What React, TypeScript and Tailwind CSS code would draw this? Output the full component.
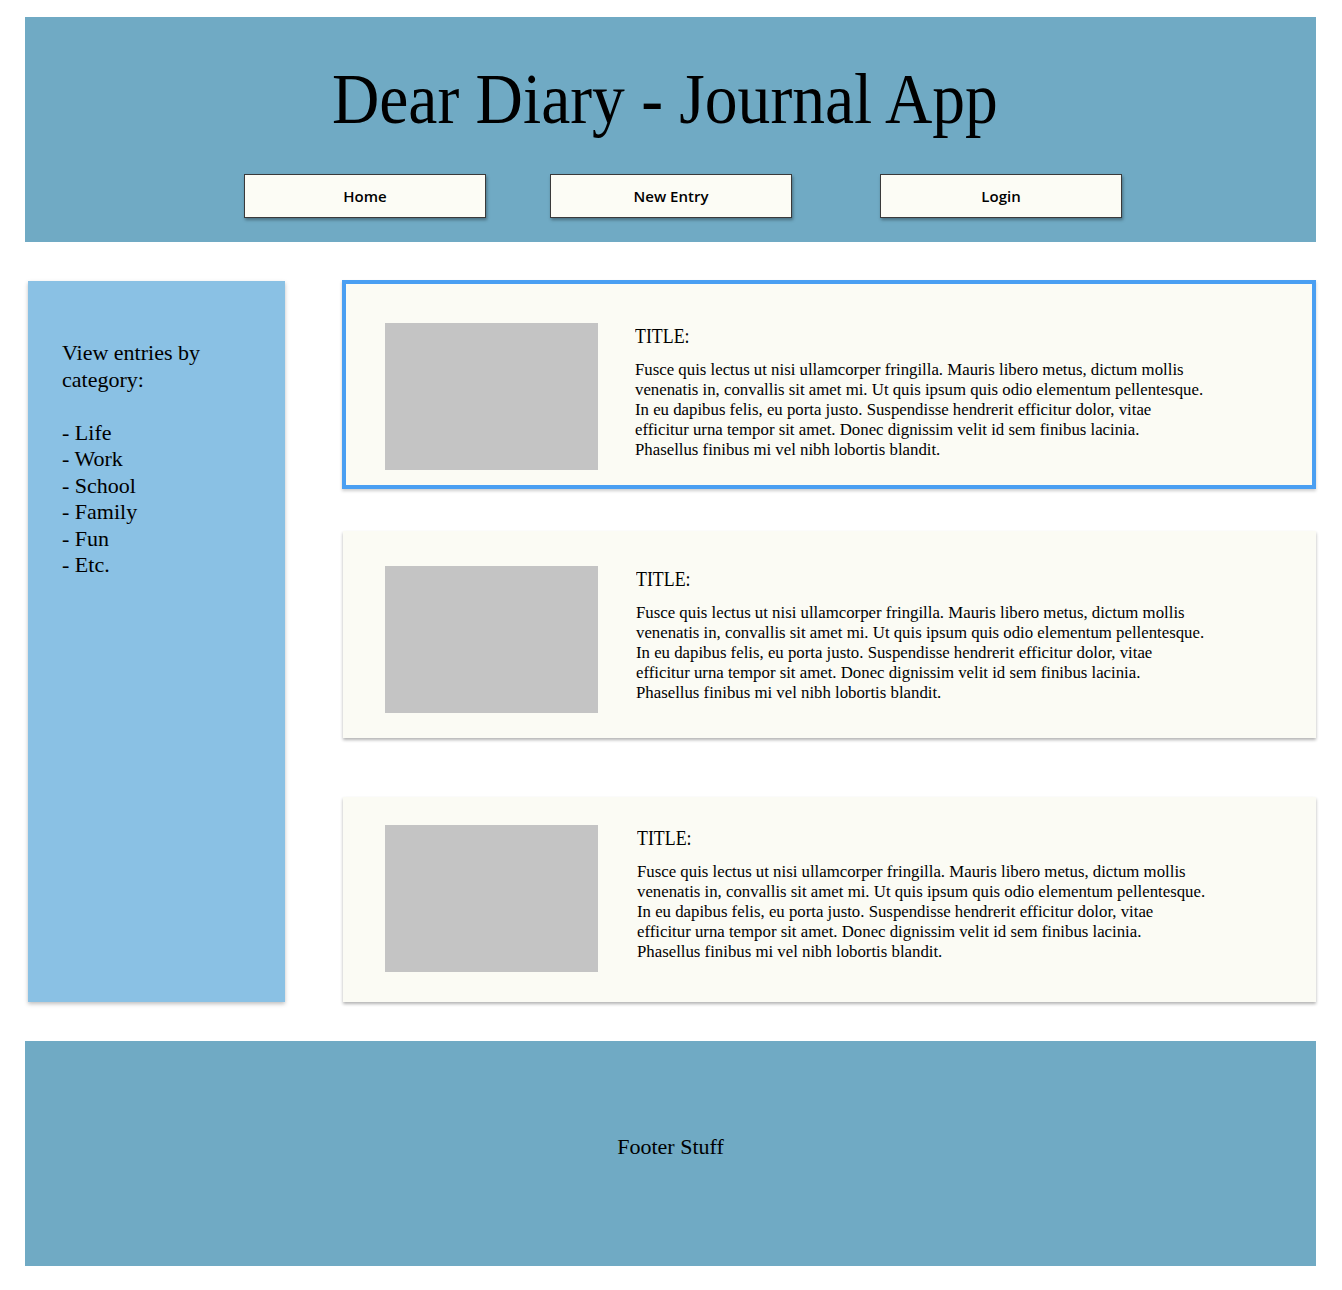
import React from "react";

const serif = { fontFamily: '"Liberation Serif", "DejaVu Serif", serif' };

const lines = [
  "Fusce quis lectus ut nisi ullamcorper fringilla. Mauris libero metus, dictum mollis",
  "venenatis in, convallis sit amet mi. Ut quis ipsum quis odio elementum pellentesque.",
  "In eu dapibus felis, eu porta justo. Suspendisse hendrerit efficitur dolor, vitae",
  "efficitur urna tempor sit amet. Donec dignissim velit id sem finibus lacinia.",
  "Phasellus finibus mi vel nibh lobortis blandit.",
];

function Card({ outer, pt, textPl }: { outer: string; pt: string; textPl: string }) {
  return (
    <div className={outer}>
      <div className={`flex ${pt}`}>
        <div className="ml-[42px] w-[213px] h-[147px] bg-[#c4c4c4] shrink-0" />
        <div className={textPl}>
          <div className="text-[21px] leading-[26px] text-black font-['Liberation_Serif'] inline-block origin-left scale-x-[0.85]">
            TITLE:
          </div>
          <div className="mt-[10px] text-[16.8px] leading-[20px] text-black font-['Liberation_Serif'] whitespace-nowrap">
            {lines.map((l) => (
              <div key={l}>{l}</div>
            ))}
          </div>
        </div>
      </div>
    </div>
  );
}

function NavButton({ label, className }: { label: string; className: string }) {
  return (
    <div
      className={`${className} w-[242px] h-[44px] bg-[#fcfcf5] border border-[#3a3a3a] shadow-[1px_2px_3px_rgba(0,0,0,0.35)] flex items-center justify-center text-[15px] font-semibold text-black font-['Open_Sans']`}
    >
      {label}
    </div>
  );
}

export default function App() {
  return (
    <div className="w-[1342px] min-h-[1290px] bg-white pt-[17px] px-[25px] pb-[24px]" style={serif}>
      {/* Header */}
      <div className="w-[1291px] h-[225px] bg-[#70aac4] flex flex-col items-center">
        <div className="mt-[37px] h-[90px] flex items-center justify-center pr-[11px]">
          <h1 className="inline-block text-[72px] leading-[90px] text-black font-['Liberation_Serif'] scale-x-[0.91] whitespace-nowrap">
            Dear Diary - Journal App
          </h1>
        </div>
        <div className="mt-[30px] w-full flex">
          <NavButton label="Home" className="ml-[219px]" />
          <NavButton label="New Entry" className="ml-[64px]" />
          <NavButton label="Login" className="ml-[88px]" />
        </div>
      </div>

      {/* Main */}
      <div className="mt-[39px] flex items-start">
        <aside className="ml-[3px] w-[257px] h-[721px] bg-[#8ac1e4] shadow-[0_2px_4px_rgba(0,0,0,0.25)] pt-[59px] pl-[34px] text-[22px] leading-[26.5px] text-black">
          <div>View entries by</div>
          <div>category:</div>
          <div className="h-[26.5px]" />
          <div>- Life</div>
          <div>- Work</div>
          <div>- School</div>
          <div>- Family</div>
          <div>- Fun</div>
          <div>- Etc.</div>
        </aside>

        <div className="ml-[57px] w-[974px] flex flex-col">
          <Card
            outer="-mt-[1px] h-[209px] bg-[#fbfbf4] border-[4px] border-[#4a9ff2] shadow-[0_2px_3px_rgba(0,0,0,0.2)]"
            pt="pt-[39px] -ml-[3px]"
            textPl="pl-[37px]"
          />
          <Card
            outer="mt-[42px] ml-[1px] h-[207px] bg-[#fbfbf4] shadow-[0_2px_3px_rgba(0,0,0,0.3)]"
            pt="pt-[35px]"
            textPl="pl-[38px]"
          />
          <Card
            outer="mt-[59px] ml-[1px] h-[205px] bg-[#fbfbf4] shadow-[0_2px_3px_rgba(0,0,0,0.3)]"
            pt="pt-[28px]"
            textPl="pl-[39px]"
          />
        </div>
      </div>

      {/* Footer */}
      <div className="mt-[39px] w-[1291px] h-[225px] bg-[#70aac4] flex items-center justify-center">
        <div className="text-[22px] text-black -mt-[14px]">Footer Stuff</div>
      </div>
    </div>
  );
}
